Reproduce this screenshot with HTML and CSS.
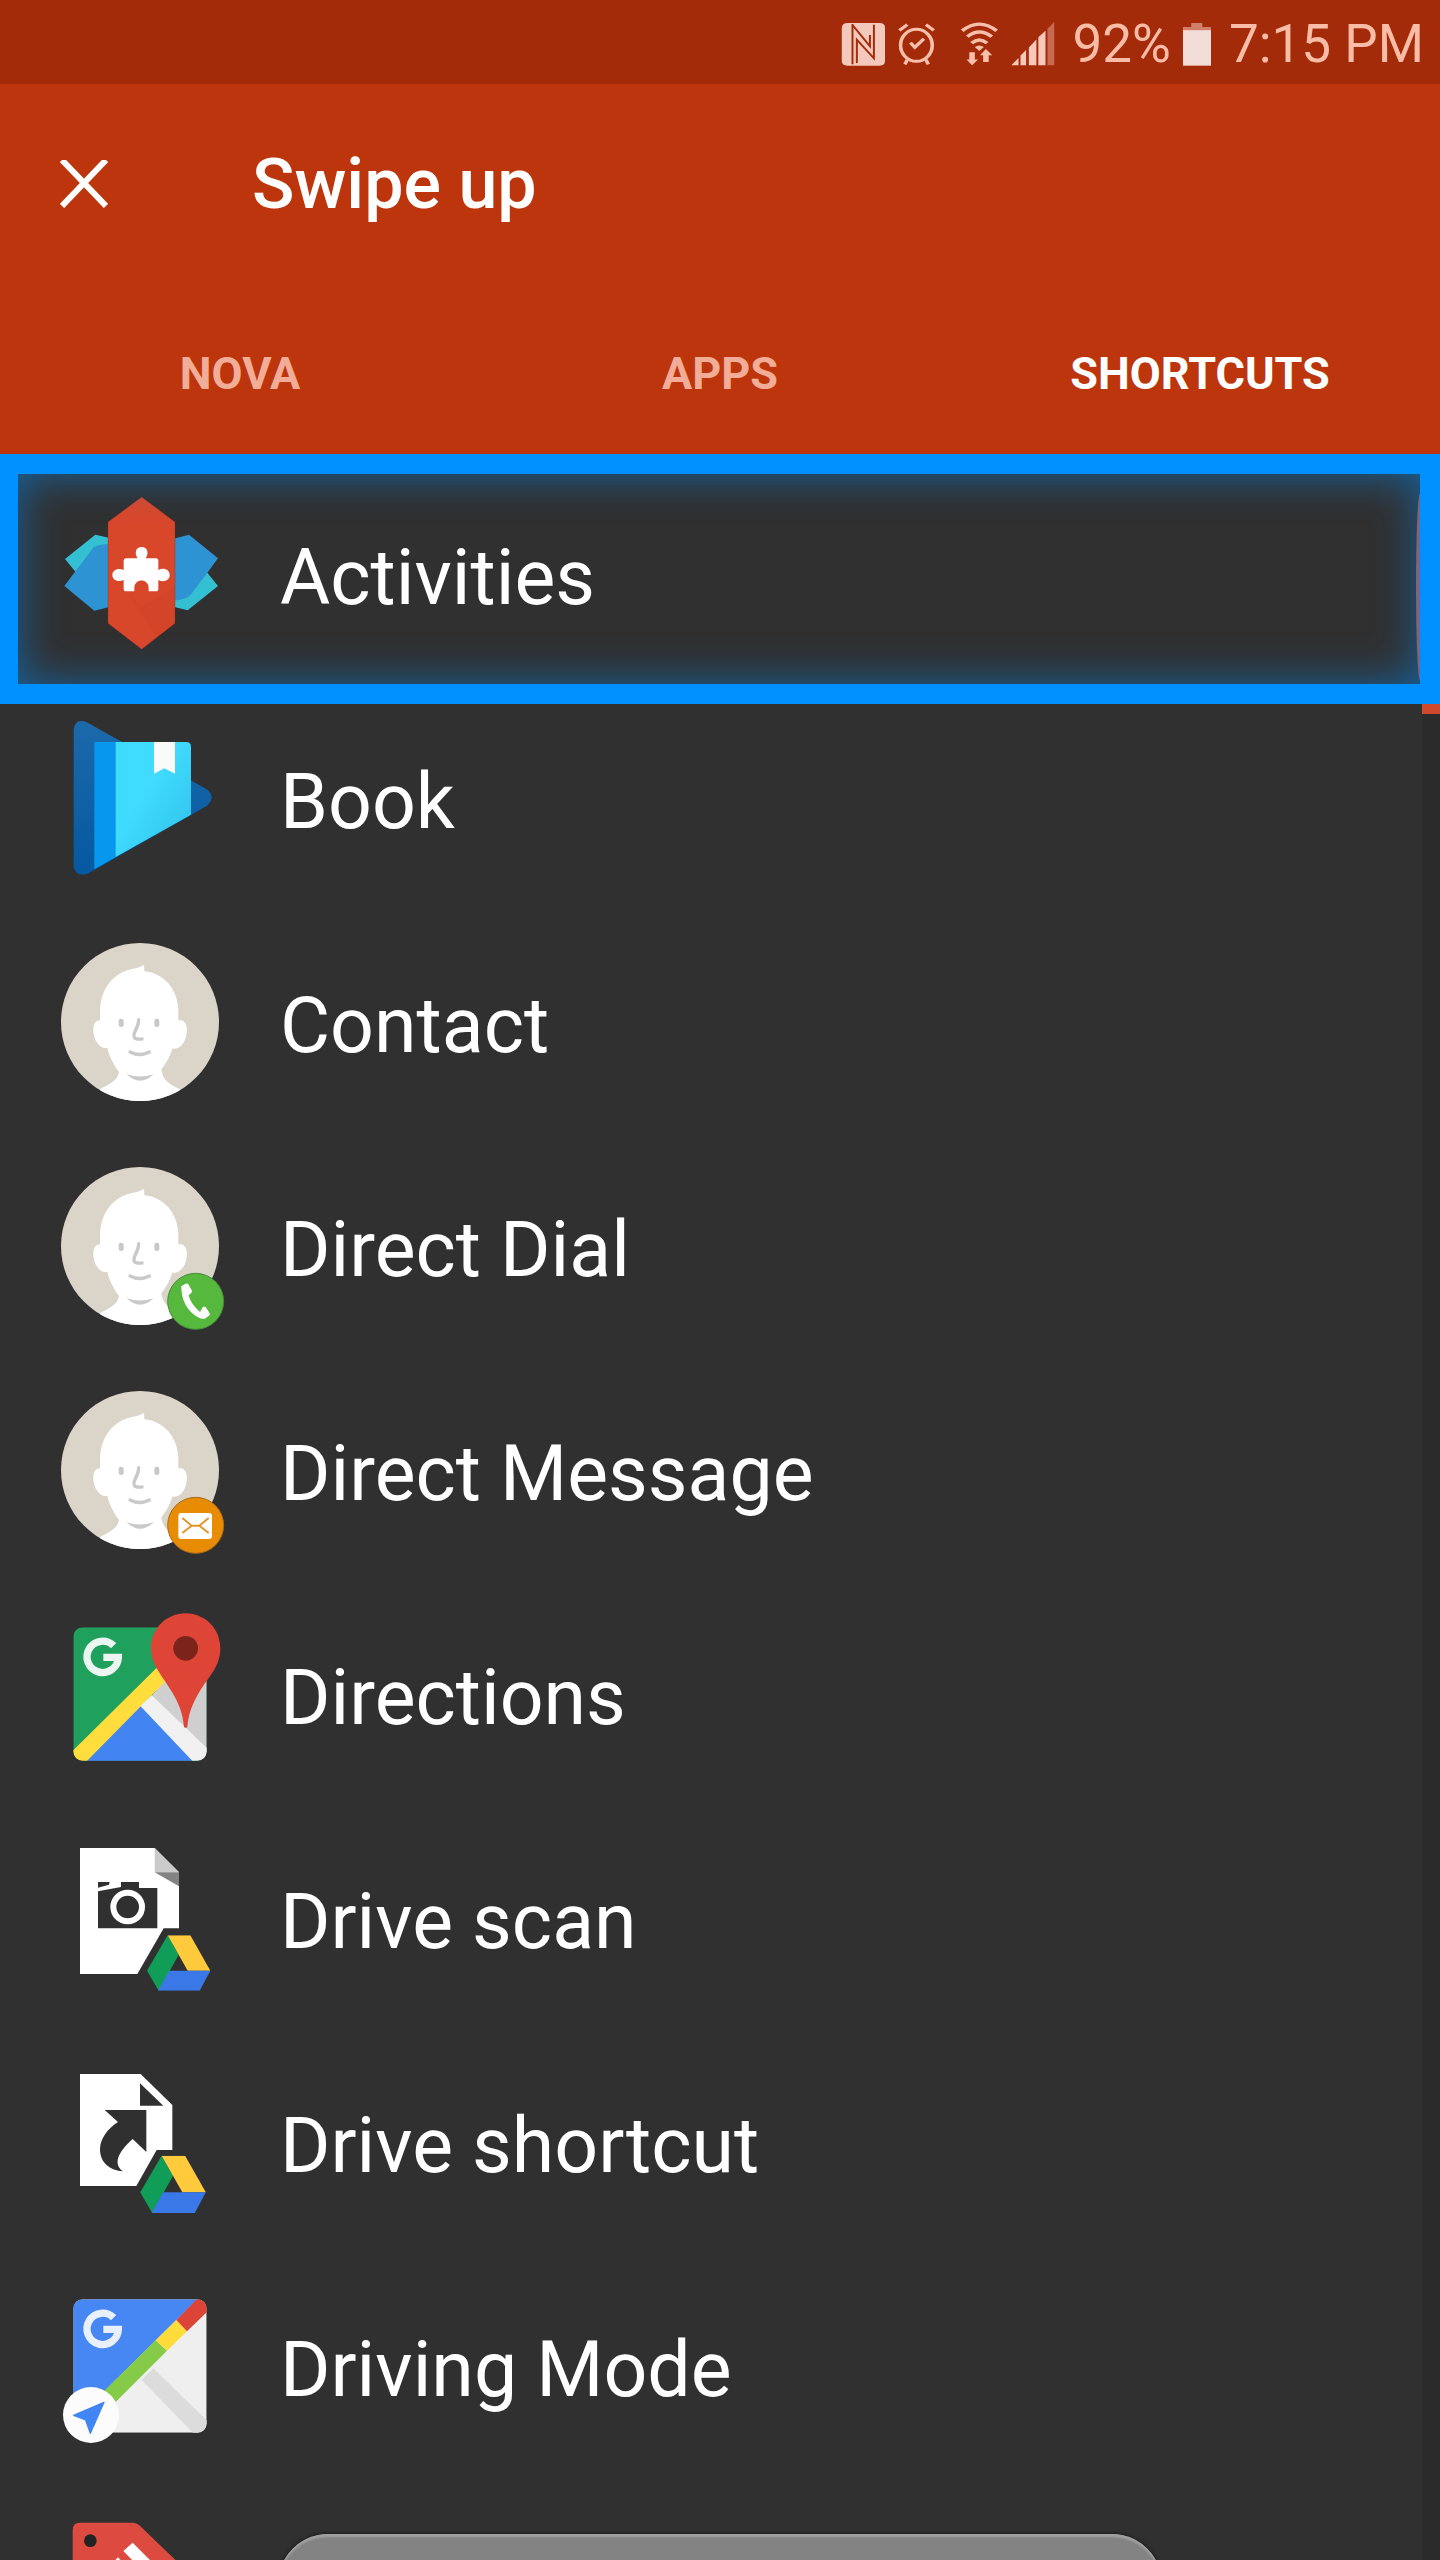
FILE: index.html
```html
<!DOCTYPE html>
<html lang="en">
<head>
<meta charset="utf-8">
<meta name="viewport" content="width=device-width, initial-scale=1">
<title>Swipe up</title>
<link rel="stylesheet" href="styles.css">
</head>
<body>
<svg class="defs" aria-hidden="true">
  <defs>
    <linearGradient id="book-back" x1="0" y1="0" x2="0" y2="1"><stop offset="0" stop-color="#1c69ab"/><stop offset="1" stop-color="#0559a0"/></linearGradient>
    <linearGradient id="book-page" x1="0" y1="0" x2="1" y2="1"><stop offset="0.4" stop-color="#40dcff"/><stop offset="1" stop-color="#2fbfe6"/></linearGradient>
    <clipPath id="face-clip"><circle cx="300" cy="306" r="237"/></clipPath>
    <clipPath id="map-clip"><rect x="100" y="112" width="400" height="400" rx="28"/></clipPath>
    <clipPath id="drive-clip"><rect x="100" y="88" width="400" height="400" rx="28"/></clipPath>
    <symbol id="person" viewBox="60 66 480 480">
      <circle cx="300" cy="306" r="237" fill="#dbd5c9"/>
      <g clip-path="url(#face-clip)">
        <path fill="#fff" d="M180 302V270C182 205 222 155 280 146C295 143 304 139 312 134L313 154C372 160 412 206 415 270V302C436 296 444 320 440 340C436 372 416 390 397 386C390 410 378 430 364 448C368 486 396 496 420 508L440 560H160L180 508C206 492 232 484 237 456C222 436 208 410 202 384C180 388 160 362 160 330C160 310 168 298 180 302Z"/>
      </g>
      <g fill="#c9c9c9"><rect x="236" y="296" width="15" height="25" rx="7"/><rect x="343" y="296" width="15" height="25" rx="7"/><path d="M260 463Q300 476 341 463Q300 502 260 463Z"/></g>
      <path d="M296 299C296 326 276 338 283 352C287 359 298 358 306 357M270 396Q299 411 328 396" fill="none" stroke="#c9c9c9" stroke-width="10" stroke-linecap="round" stroke-linejoin="round"/>
    </symbol>
    <symbol id="drive" viewBox="0 0 190 166">
      <path fill="#0f9d58" d="M62 0L95 58L35 166L0 106Z"/>
      <path fill="#ffcb3d" d="M62 0H130L190 106H122Z"/>
      <path fill="#3b78e7" d="M66 106H190L158 166H33Z"/>
    </symbol>
  </defs>
</svg>
<div class="screen">
  <div class="status">
    <svg class="ico ico-nfc" viewBox="51 63 111 132" preserveAspectRatio="none" aria-hidden="true"><path fill="#f3c9bc" d="M68 66H148Q162 66 162 80V180Q162 194 148 194H68Q53 194 53 180V82Q53 66 68 66Z"/><path d="M80 69V190M91 186V116L134 172V71M80 72L124 136V102" fill="none" stroke="#a42b0a" stroke-width="5"/></svg>
    <svg class="ico ico-alarm" viewBox="192 63 101 132" preserveAspectRatio="none" aria-hidden="true"><g fill="none" stroke="#f8bfab" stroke-width="9"><ellipse cx="241" cy="133" rx="40" ry="48"/><path d="M198 88L218 71M285 88L265 71M218 176L212 190M265 176L271 190M226 125L237 139L260 113"/></g></svg>
    <svg class="ico ico-wifi" viewBox="347 60 101 135" preserveAspectRatio="none" aria-hidden="true"><g fill="none" stroke="#f8bfab" stroke-width="10"><path d="M355 87Q398 46 442 87M368 105Q398 76 430 105M379 125Q398 106 418 125"/></g><path fill="#f8bfab" d="M387 137Q398 127 410 137L398 149ZM373 153H387V175H395L380 193L366 175H373ZM408 183H422V162H431L415 143L400 162H408Z"/></svg>
    <svg class="ico ico-signal" viewBox="481 63 111 130" preserveAspectRatio="none" aria-hidden="true"><g fill="#f8c9bb"><path d="M482 191L500 169V191ZM505 162L519 146V191H505ZM526 138L545 115V191H526ZM550 108L568 89V191H550Z"/></g><path fill="#c76a51" d="M573 83L590 63V191H573Z"/></svg>
    <span class="pct">92%</span>
    <svg class="ico ico-batt" viewBox="913 63 71 130" preserveAspectRatio="none" aria-hidden="true"><path fill="#d07f68" d="M934 66H962V78H984V88H913V78H934Z"/><path fill="#f3ddd8" d="M913 87H984V192H913Z"/></svg>
    <span class="clock">7:15 PM</span>
  </div>
  <header class="bar">
    <div class="toolbar">
      <button class="close" type="button" aria-label="Close"><svg viewBox="0 0 48 48" aria-hidden="true"><path d="M2 0L46 46M46 0L2 46" stroke="#fff" stroke-width="6"/></svg></button>
      <h1>Swipe up</h1>
    </div>
    <nav class="tabs">
      <button type="button">NOVA</button>
      <button type="button">APPS</button>
      <button type="button" class="active">SHORTCUTS</button>
    </nav>
  </header>
  <main class="list-wrap">
    <ul class="list">
      <li><button class="row" type="button">
        <svg class="pic" viewBox="180 162 480 480" aria-hidden="true">
          <path fill="#35bfd3" d="M195 357L286 284L330 294V500L230 400Z"/><path fill="#2d93d2" d="M193 438L281 322Q290 315 325 312V502L283 512Z"/>
          <path fill="#35bfd3" d="M654 438L563 511L520 500V440L622 398Z"/><path fill="#2d93d2" d="M654 355L567 284L520 296V482Q560 478 572 464L622 398Z"/>
          <path fill="#d9472b" stroke="#8a2b1c" stroke-width="1" d="M425 171L525 246V550L425 628L324 550V246Z"/>
          <path fill="#c23a20" d="M380 456L425 500L525 440V550L470 592Z" opacity=".2"/>
          <path fill="#fff" d="M380 355H413C402 338 408 321 425 321S448 338 437 355H468Q475 355 475 363V390C490 382 509 388 509 405S490 428 475 420V446Q475 454 467 454H446V444C446 414 403 414 403 444V454H379Q371 454 371 446V420C354 428 337 420 337 405S354 382 371 390V363Q371 355 380 355Z"/>
        </svg><span>Activities</span></button></li>
      <li><button class="row" type="button">
        <svg class="pic" viewBox="60 54 480 480" aria-hidden="true">
          <path fill="url(#book-back)" d="M101 90Q104 55 139 66L500 268Q530 291 500 318L143 521Q108 532 101 500Z"/>
          <path fill="#0797ee" d="M163 126H228V471L163 508Z"/><path fill="url(#book-page)" d="M227 126H438Q453 126 453 140V344L227 471Z"/><path fill="#fafafa" d="M342 126H405V221L373 205L342 221Z"/>
        </svg><span>Book</span></button></li>
      <li><button class="row" type="button"><svg class="pic" viewBox="0 0 160 160" aria-hidden="true"><use href="#person" width="160" height="160"/></svg><span>Contact</span></button></li>
      <li><button class="row" type="button">
        <svg class="pic" viewBox="60 66 480 480" aria-hidden="true"><use href="#person" x="60" y="66" width="480" height="480"/>
          <circle cx="467" cy="472" r="84" fill="#56b83c" stroke="#4a8a3d" stroke-width="3"/>
          <path fill="#fff" d="M424 432Q422 426 428 424L438 419Q443 417 446 422L456 440Q457 446 451 449L446 454Q452 480 480 504L488 490Q492 486 497 489L509 508Q511 514 505 517L494 524Q484 526 474 520Q426 492 424 432Z"/>
        </svg><span>Direct Dial</span></button></li>
      <li><button class="row" type="button">
        <svg class="pic" viewBox="60 66 480 480" aria-hidden="true"><use href="#person" x="60" y="66" width="480" height="480"/>
          <circle cx="467" cy="472" r="84" fill="#e98c05" stroke="#a86a18" stroke-width="3"/>
          <rect x="415" y="435" width="101" height="78" rx="9" fill="#fff"/><path d="M427 450L455 473H478L506 450M427 495L455 473M506 495L478 473" fill="none" stroke="#e2952f" stroke-width="6"/>
        </svg><span>Direct Message</span></button></li>
      <li><button class="row" type="button">
        <svg class="pic" viewBox="60 72 480 480" aria-hidden="true">
          <g clip-path="url(#map-clip)"><path fill="#1fa15d" d="M100 112H500V512H100Z"/><path fill="#cfcfcf" d="M500 180V512L335 318L390 250Z"/><path fill="#4384f3" d="M301 348L464 516H138Z"/><path fill="#ffdd3c" d="M80 500L370 214L400 250L130 524Z"/><path fill="#f1f1f1" d="M335 316L301 348L464 520H520V492Z"/></g>
          <path d="M221 167A47 47 0 1 0 235 202H190" fill="none" stroke="#eaf6ef" stroke-width="22"/>
          <path fill="#de4537" d="M437 70C494 70 541 116 541 174C541 230 506 260 478 306C456 342 446 372 442 410Q437 417 432 410C428 372 418 342 396 306C370 260 333 226 333 174C333 116 380 70 437 70Z"/><circle cx="437" cy="175" r="37" fill="#7c231c"/>
        </svg><span>Directions</span></button></li>
      <li><button class="row" type="button">
        <svg class="pic" viewBox="60 54 480 480" aria-hidden="true">
          <path fill="#fff" d="M120 84H344L417 157V325H371L292 462H120Z"/><path fill="#cbcbcb" d="M344 84L417 157H344Z"/><path fill="#838383" d="M344 157H417V199Z"/>
          <path fill="#303030" d="M174 186H209L207 194L174 203ZM174 214L243 201V186H297V204H352V325H174Z"/><circle cx="263" cy="261" r="43" fill="#303030" stroke="#fff" stroke-width="18"/>
          <use href="#drive" x="321" y="346" width="190" height="166"/>
        </svg><span>Drive scan</span></button></li>
      <li><button class="row" type="button">
        <svg class="pic" viewBox="60 726 480 480" aria-hidden="true">
          <path fill="#fff" d="M120 762H302L397 855V990H350L289 1098H120Z"/><path fill="#303030" d="M300 790L370 857H300ZM194 870H319V996L278 957C246 985 212 1028 249 1054C210 1052 180 1028 180 988C180 956 204 925 234 906Z"/>
          <use href="#drive" x="300" y="1007" width="198" height="172"/>
        </svg><span>Drive shortcut</span></button></li>
      <li><button class="row" type="button">
        <svg class="pic" viewBox="60 48 480 480" aria-hidden="true">
          <g clip-path="url(#drive-clip)"><path fill="#efefef" d="M100 88H500V488H100Z"/><path fill="#4787f3" d="M100 88H472L100 456Z"/><path fill="#dcdcdc" d="M305 330L340 295L510 460V500H470Z"/><path fill="#86cb48" d="M180 375L347 211L381 242L205 418Z"/><path fill="#ffdc3a" d="M347 211L409 150L441 184L381 242Z"/><path fill="#db4437" d="M409 150L480 78L520 108L441 184Z"/></g>
          <path d="M221 143A47 47 0 1 0 235 178H190" fill="none" stroke="#e9f0fd" stroke-width="22"/>
          <circle cx="153" cy="435" r="84" fill="#fcfcfc"/><path fill="#4285f4" stroke="#4285f4" stroke-width="4" stroke-linejoin="round" d="M192 397L151 490L137 450L101 436Z"/>
        </svg><span>Driving Mode</span></button></li>
      <li><button class="row" type="button" aria-label="Shopping">
        <svg class="pic" viewBox="60 720 480 480" aria-hidden="true">
          <path fill="#dd4b40" d="M120 758H280Q290 758 298 766L500 960L300 1160L98 960V780Q98 758 120 758Z"/><circle cx="151" cy="812" r="19" fill="#242424"/><path fill="#fff" d="M278 818L360 900L330 925L250 843ZM234 862L290 918L260 940L212 884Z"/>
        </svg></button></li>
    </ul>
    <div class="track"><div class="thumb"></div></div>
    <div class="highlight"></div>
  </main>
  <div class="toast"></div>
</div>
</body>
</html>
```
FILE: styles.css
```css
* { box-sizing: border-box; }

body {
  margin: 0;
  background: #303030;
  color: #fff;
  font-family: Roboto, "Liberation Sans", sans-serif;
}

button {
  margin: 0;
  padding: 0;
  border: 0;
  background: none;
  color: inherit;
  font: inherit;
}

.defs {
  position: absolute;
  width: 0;
  height: 0;
}

.screen {
  position: relative;
  display: flex;
  flex-direction: column;
  height: 100vh;
  overflow: hidden;
}

.status {
  flex: none;
  display: flex;
  align-items: center;
  justify-content: flex-end;
  gap: 12px;
  height: 84px;
  padding: 4px 16px 0 0;
  background: #a42b0a;
  color: #f9bca6;
  font-size: 53px;
  line-height: 60px;
}

.ico { height: 44px; }
.ico-nfc,
.ico-signal { width: 44px; }
.ico-alarm,
.ico-wifi { width: 40px; }
.ico-wifi { margin-left: 10px; }
.ico-batt { width: 28px; }
.pct { margin-left: 6px; }
.clock { margin-left: 6px; }

.bar {
  flex: none;
  background: #bd350c;
}

.toolbar {
  display: flex;
  align-items: center;
  height: 200px;
  padding-left: 60px;
  gap: 144px;
}

.close,
.close svg {
  display: block;
  width: 48px;
  height: 48px;
}

h1 {
  margin: 0;
  font-size: 70px;
  font-weight: 500;
  line-height: 80px;
}

.tabs {
  display: grid;
  grid-template-columns: repeat(3, 1fr);
  height: 170px;
  padding-top: 8px;
  font-size: 45px;
  font-weight: 700;
}

.tabs button { color: #f2ad98; }
.tabs .active { color: #fff; }

.list-wrap {
  position: relative;
  flex: 1;
  min-height: 0;
}

.list {
  margin: 0;
  padding: 8px 0 0;
  list-style: none;
}

.row {
  display: flex;
  align-items: center;
  gap: 60px;
  width: 100%;
  height: 224px;
  padding-left: 60px;
  font-size: 77px;
  line-height: 92px;
  text-align: left;
}

.row span { padding-top: 8px; }

.pic {
  flex: none;
  width: 160px;
  height: 160px;
  overflow: visible;
}

.track {
  position: absolute;
  top: 0;
  right: 0;
  bottom: 0;
  width: 18px;
  background: #2b2b2b;
}

.thumb {
  height: 260px;
  background: #cf4a2d;
}

.highlight {
  position: absolute;
  top: 0;
  left: 0;
  right: 0;
  height: 250px;
  border: 20px solid #0090ff;
  border-left-width: 18px;
  box-shadow: inset 0 0 44px rgba(0, 144, 255, 0.55);
  pointer-events: none;
}

.highlight::after {
  content: "";
  position: absolute;
  top: 20px;
  right: 0;
  bottom: 4px;
  width: 4px;
  border-radius: 100% 0 0 100% / 50%;
  background: #796680;
}

.toast {
  position: absolute;
  left: 278px;
  right: 278px;
  bottom: -74px;
  height: 100px;
  border-radius: 50px;
  background: #838383;
  box-shadow: inset 0 3px 2px #a0a0a0, 0 0 3px 1px #1c1c1c;
}
```
